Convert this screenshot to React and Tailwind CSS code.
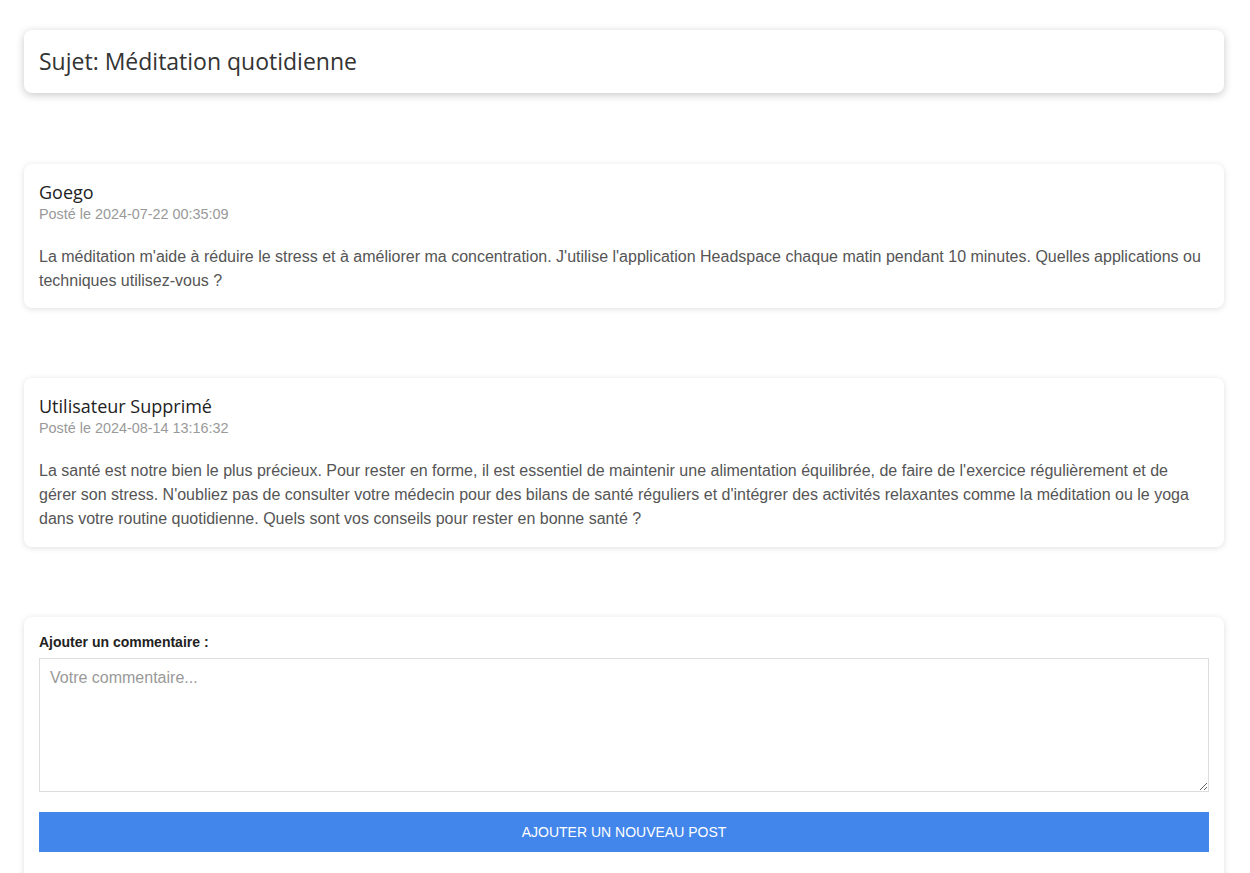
export default function App() {
  const seg = { fontFamily: '"Open Sans", "Noto Sans", sans-serif' };
  const ari = { fontFamily: '"Liberation Sans", Arial, sans-serif' };
  return (
    <div className="min-h-screen bg-white pl-6 pt-[30px]" style={ari}>
      <div className="w-[1200px]">
        <div className="rounded-lg bg-white px-[15px] h-[63px] flex items-center shadow-[0_2px_8px_rgba(0,0,0,0.22)]">
          <h1 className="text-[23px] text-[#333] leading-none" style={seg}>Sujet: Méditation quotidienne</h1>
        </div>

        <div className="mt-[71px] rounded-lg bg-white px-[15px] pt-[15px] pb-[15px] shadow-[0_1px_6px_rgba(0,0,0,0.13)]">
          <div className="text-[18px] leading-[26px] text-[#222]" style={seg}>Goego</div>
          <div className="text-[14.4px] leading-[18px] text-[#999]">Posté le 2024-07-22 00:35:09</div>
          <p className="mt-[22px] text-[16px] leading-[24px] text-[#555]">
            La méditation m'aide à réduire le stress et à améliorer ma concentration. J'utilise l'application Headspace chaque matin pendant 10 minutes. Quelles applications ou techniques utilisez-vous ?
          </p>
        </div>

        <div className="mt-[70px] rounded-lg bg-white px-[15px] pt-[15px] pb-[16px] shadow-[0_1px_6px_rgba(0,0,0,0.13)]">
          <div className="text-[18px] leading-[26px] text-[#222]" style={seg}>Utilisateur Supprimé</div>
          <div className="text-[14.4px] leading-[18px] text-[#999]">Posté le 2024-08-14 13:16:32</div>
          <p className="mt-[22px] text-[16px] leading-[24px] text-[#555]">
            La santé est notre bien le plus précieux. Pour rester en forme, il est essentiel de maintenir une alimentation équilibrée, de faire de l'exercice régulièrement et de gérer son stress. N'oubliez pas de consulter votre médecin pour des bilans de santé réguliers et d'intégrer des activités relaxantes comme la méditation ou le yoga dans votre routine quotidienne. Quels sont vos conseils pour rester en bonne santé ?
          </p>
        </div>

        <div className="mt-[70px] rounded-lg bg-white px-[15px] pt-[16px] pb-[30px] shadow-[0_1px_6px_rgba(0,0,0,0.13)]">
          <label className="block text-[14px] leading-[18px] font-bold text-[#222]">Ajouter un commentaire :</label>
          <textarea
            className="mt-[7px] block w-full h-[134px] border border-[#ddd] px-[10px] py-[8px] text-[16px] leading-[22px] text-[#333] placeholder:text-[#999] outline-none"
            placeholder="Votre commentaire..."
            style={ari}
          />
          <button className="mt-[20px] block w-full h-[40px] bg-[#4286eb] text-white text-[14px] uppercase" style={ari}>
            Ajouter un nouveau post
          </button>
        </div>
      </div>
    </div>
  );
}
